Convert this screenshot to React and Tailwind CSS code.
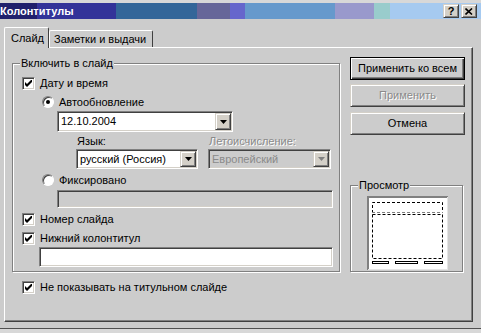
import React from 'react';

const TITLE_BLOCKS = [
  'w-[37px] bg-[#20206c]',
  'w-[79px] bg-[#333399]',
  'w-[81px] bg-[#336699]',
  'w-[33px] bg-[#666699]',
  'w-[15px] bg-[#6666cc]',
  'w-[90px] bg-[#6699cc]',
  'w-[39px] bg-[#9999cc]',
  'w-[16px] bg-[#99cccc]',
  'flex-1 bg-[#a6caf0]',
];

const sunken =
  'border border-t-[#808080] border-l-[#808080] border-r-white border-b-white shadow-[inset_1px_1px_0_#404040,inset_-1px_-1px_0_#d4d0c8]';
const raised =
  'border border-t-[#d4d0c8] border-l-[#d4d0c8] border-r-[#404040] border-b-[#404040] shadow-[inset_1px_1px_0_#fff,inset_-1px_-1px_0_#808080]';

function TitleButton({ children }) {
  return (
    <div className={`w-[16px] h-[14px] bg-[#d4d0c8] ${raised} flex items-center justify-center`}>
      {children}
    </div>
  );
}

function TitleBar() {
  return (
    <div className="relative h-[16px] flex items-center">
      <div className="absolute inset-0 flex">
        {TITLE_BLOCKS.map((c, i) => (
          <div key={i} className={`h-full ${c}`} />
        ))}
      </div>
      <span className="relative flex-1 text-white font-bold leading-[16px]">Колонтитулы</span>
      <div className="relative flex gap-[2px] mr-[4px]">
        <TitleButton>
          <span className="font-bold text-[11px] leading-none">?</span>
        </TitleButton>
        <TitleButton>
          <svg width="8" height="7" viewBox="0 0 8 7">
            <path d="M0.5 0.5 L7 6.5 M7 0.5 L0.5 6.5" stroke="black" strokeWidth="1.6" />
          </svg>
        </TitleButton>
      </div>
    </div>
  );
}

function Check() {
  return (
    <div className={`w-[13px] h-[13px] bg-white ${sunken} flex items-center justify-center shrink-0`}>
      <svg width="7" height="7" viewBox="0 0 7 7">
        <polygon points="0,2 2,4 7,-1 7,2 2,7 0,5" fill="black" />
      </svg>
    </div>
  );
}

function Radio({ on }) {
  return (
    <div className="w-[12px] h-[12px] rounded-full bg-white border border-t-[#808080] border-l-[#808080] border-r-white border-b-white shadow-[inset_1px_1px_0_#404040] flex items-center justify-center shrink-0">
      {on && <div className="w-[4px] h-[4px] rounded-full bg-black" />}
    </div>
  );
}

function DropButton({ disabled }) {
  return (
    <div className={`w-[16px] h-full bg-[#d4d0c8] ${raised} flex items-center justify-center`}>
      <svg width="7" height="4" viewBox="0 0 7 4">
        <polygon points="0,0 7,0 3.5,4" fill={disabled ? '#808080' : 'black'} />
      </svg>
    </div>
  );
}

function Combo({ value, width, disabled }) {
  return (
    <div
      className={`${width} h-[20px] ${sunken} ${
        disabled ? 'bg-[#cccccc] text-[#8a8a8a]' : 'bg-white'
      } flex items-center p-[1px]`}
    >
      <span className="flex-1 pl-[2px] leading-[13px]">{value}</span>
      <DropButton disabled={disabled} />
    </div>
  );
}

function Row({ children, className = '' }) {
  return <div className={`flex items-center gap-[5px] leading-[13px] ${className}`}>{children}</div>;
}

function PreviewPage() {
  return (
    <svg width="81" height="74" viewBox="0 0 81 74">
      <rect x="0" y="0" width="81" height="74" fill="white" />
      <path d="M0 0.5 H81 M0 1.5 H80 M0.5 0 V74 M1.5 0 V73" stroke="#808080" />
      <path d="M80.5 1 V74 M1 73.5 H81" stroke="#e4e4e4" />
      <path d="M5.5 17 V6.5 H75.5 V17" stroke="black" strokeDasharray="3 2" fill="none" />
      <path d="M5 16.5 H76" stroke="#808080" strokeDasharray="3 2" />
      <rect x="5.5" y="18.5" width="70" height="44" stroke="black" strokeDasharray="3 2" fill="none" />
      <rect x="5.5" y="65.5" width="16" height="2" stroke="black" fill="white" />
      <rect x="28.5" y="65.5" width="22" height="2" stroke="black" fill="white" />
      <rect x="57.5" y="65.5" width="18" height="2" stroke="black" fill="white" />
    </svg>
  );
}

function GroupBox({ label, className, children }) {
  return (
    <div
      className={`relative border border-[#808080] shadow-[1px_1px_0_#fff,inset_1px_1px_0_#fff] ${className}`}
    >
      <span className="absolute -top-[7px] left-[7px] bg-[#cccccc] px-[1px] leading-[13px]">{label}</span>
      {children}
    </div>
  );
}

export default function App() {
  return (
    <div className="w-[481px] h-[333px] overflow-hidden bg-[#cccccc] text-black text-[11px] font-['Liberation_Sans',Arial,sans-serif] flex flex-col">
      <div className="h-[3px] bg-[#d8d8d8]" />
      <TitleBar />

      {/* Tabs */}
      <div className="mt-[8px] ml-[4px] flex items-end h-[20px] relative z-10">
        <div className="h-[21px] w-[45px] -mb-[1px] bg-[#cccccc] border-t border-l border-white border-r border-r-[#404040] rounded-t-[2px] pl-[6px] pt-[4px] leading-[13px]">
          Слайд
        </div>
        <div className="h-[17px] w-[104px] border-t border-l border-white border-r border-r-[#404040] rounded-t-[2px] pl-[4px] pt-[2px] leading-[13px]">
          Заметки и выдачи
        </div>
      </div>

      {/* Panel */}
      <div className="ml-[4px] w-[469px] h-[275px] border border-t-white border-l-white border-r-[#404040] border-b-[#404040] shadow-[inset_-1px_-1px_0_#808080] flex">
        <div className="pt-[15px] pl-[7px] flex flex-col">
          <GroupBox label="Включить в слайд" className="w-[328px] h-[209px]">
            <div className="pl-[9px] flex flex-col">
              <Row className="mt-[13px] h-[13px]">
                <Check />
                <span className="ml-[0px]">Дату и время</span>
              </Row>
              <Row className="mt-[6px] h-[12px] ml-[20px]">
                <Radio on />
                <span>Автообновление</span>
              </Row>
              <div className="mt-[3px] ml-[35px]">
                <div className={`w-[176px] h-[21px] ${sunken} bg-white flex items-center p-[1px]`}>
                  <span className="flex-1 pl-[2px] leading-[13px]">12.10.2004</span>
                  <DropButton />
                </div>
              </div>
              <div className="mt-[3px] h-[13px] ml-[55px] flex leading-[13px]">
                <span className="w-[132px]">Язык:</span>
                <span className="text-[#8a8a8a] [text-shadow:1px_1px_0_#fff]">Летоисчисление:</span>
              </div>
              <div className="mt-[1px] ml-[54px] flex gap-[10px]">
                <Combo value="русский (Россия)" width="w-[122px]" />
                <Combo value="Европейский" width="w-[123px]" disabled />
              </div>
              <Row className="mt-[5px] h-[12px] ml-[20px]">
                <Radio />
                <span>Фиксировано</span>
              </Row>
              <div className={`mt-[4px] ml-[35px] w-[276px] h-[18px] ${sunken} bg-[#cccccc]`} />
              <Row className="mt-[5px] h-[13px]">
                <Check />
                <span>Номер слайда</span>
              </Row>
              <Row className="mt-[6px] h-[13px]">
                <Check />
                <span>Нижний колонтитул</span>
              </Row>
              <div className={`mt-[2px] ml-[17px] w-[294px] h-[20px] ${sunken} bg-white`} />
            </div>
          </GroupBox>
          <Row className="mt-[9px] ml-[10px] h-[13px]">
            <Check />
            <span>Не показывать на титульном слайде</span>
          </Row>
        </div>

        <div className="ml-[10px] pt-[9px] flex flex-col">
          <div className="w-[115px] h-[23px] border border-black bg-[#cccccc] shadow-[inset_1px_1px_0_#fff,inset_-1px_-1px_0_#404040,inset_-2px_-2px_0_#808080] flex items-center justify-center leading-[13px]">
            Применить ко всем
          </div>
          <div className={`mt-[4px] w-[115px] h-[23px] ${raised} bg-[#cccccc] flex items-center justify-center leading-[13px] text-[#8a8a8a] [text-shadow:1px_1px_0_#fff]`}>
            Применить
          </div>
          <div className={`mt-[5px] w-[115px] h-[23px] ${raised} bg-[#cccccc] flex items-center justify-center leading-[13px]`}>
            Отмена
          </div>
          <GroupBox label="Просмотр" className="mt-[50px] w-[113px] h-[87px]">
            <div className="pl-[16px] pt-[10px]">
              <PreviewPage />
            </div>
          </GroupBox>
        </div>
      </div>

      <div className="mt-[6px] h-[1px] bg-[#505050]" />
      <div className="flex-1 bg-[#d8d8d8]" />
    </div>
  );
}
